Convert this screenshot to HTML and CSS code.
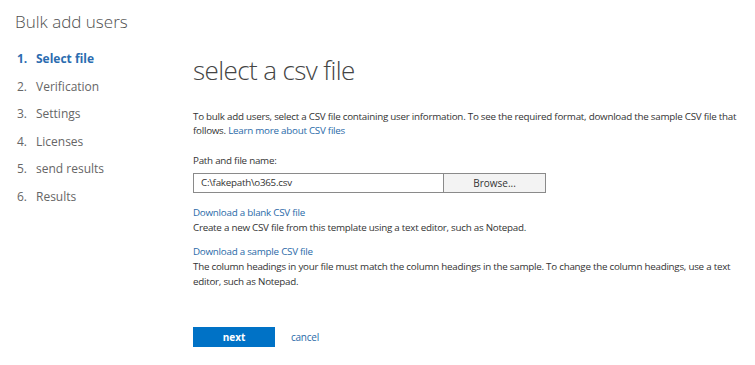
FILE: index.html
```html
<!DOCTYPE html>
<html lang="en">
<head>
    <meta charset="UTF-8">
    <title>Bulk add users</title>
    <link rel="stylesheet" href="styles.css">
</head>
<body>
    <div class="page">
        <div class="sidebar">
            <h2>Bulk add users</h2>
            <ul class="steps">
                <li class="active"><span class="num">1.</span>Select file</li>
                <li><span class="num">2.</span>Verification</li>
                <li><span class="num">3.</span>Settings</li>
                <li><span class="num">4.</span>Licenses</li>
                <li><span class="num">5.</span>send results</li>
                <li><span class="num">6.</span>Results</li>
            </ul>
        </div>

        <div class="content">
            <h1>select a csv file</h1>
            <p class="intro">To bulk add users, select a CSV file containing user information. To see the required format, download the sample CSV file that follows. <a href="#">Learn more about CSV files</a></p>

            <label class="field-label">Path and file name:</label>
            <div class="file-row">
                <div class="file-input">C:\fakepath\o365.csv</div>
                <button class="browse-btn">Browse...</button>
            </div>

            <div class="download">
                <a href="#">Download a blank CSV file</a>
                <p>Create a new CSV file from this template using a text editor, such as Notepad.</p>
            </div>

            <div class="download">
                <a href="#">Download a sample CSV file</a>
                <p>The column headings in your file must match the column headings in the sample. To change the column headings, use a text editor, such as Notepad.</p>
            </div>

            <div class="actions">
                <button class="next-btn">next</button>
                <a href="#" class="cancel">cancel</a>
            </div>
        </div>
    </div>
</body>
</html>
```

FILE: styles.css
```css
:root {
    --title-color: #505050;
    --text-color: #333333;
    --muted: #666666;
    --link: #2a6aa8;
    --active: #2b6cb0;
    --primary: #0072c6;
    --border: #8a8a8a;
}

* {
    margin: 0;
    padding: 0;
    box-sizing: border-box;
}

body {
    font-family: 'Open Sans', 'Noto Sans', sans-serif;
    background: #ffffff;
    color: var(--text-color);
}

.page {
    display: flex;
    width: 755px;
    height: 365px;
    overflow: hidden;
}

.sidebar {
    width: 193px;
    flex-shrink: 0;
    padding: 10px 0 0 15px;
}

.sidebar h2 {
    font-size: 17px;
    font-weight: 300;
    color: var(--title-color);
    line-height: 24px;
    margin-bottom: 11px;
}

.steps {
    list-style: none;
    padding-left: 2px;
}

.steps li {
    font-size: 12px;
    line-height: 27.6px;
    color: var(--muted);
}

.steps li .num {
    display: inline-block;
    width: 19px;
}

.steps li.active {
    color: var(--active);
    font-weight: 700;
}

.content {
    flex: 1;
    padding: 50px 10px 0 0;
    font-size: 9.8px;
    letter-spacing: -0.25px;
}

.content h1 {
    font-size: 26px;
    font-weight: 300;
    color: #444444;
    line-height: 40px;
    letter-spacing: -0.6px;
    margin-bottom: 20px;
}

.content a {
    color: var(--link);
    text-decoration: none;
}

.intro {
    line-height: 14px;
    margin-bottom: 16px;
}

.field-label {
    display: block;
    line-height: 14px;
    margin-bottom: 5px;
}

.file-row {
    display: flex;
    height: 20px;
    margin-bottom: 12px;
}

.file-input {
    width: 251px;
    border: 1px solid var(--border);
    padding: 0 7px;
    line-height: 18px;
}

.browse-btn {
    width: 102px;
    border: 1px solid var(--border);
    border-left: none;
    background: #f3f3f3;
    font-family: inherit;
    font-size: 10px;
    color: var(--text-color);
}

.download {
    margin-bottom: 9px;
    line-height: 15px;
}

.download a {
    display: block;
}

.actions {
    display: flex;
    align-items: center;
    gap: 16px;
    margin-top: 38px;
}

.next-btn {
    width: 82px;
    height: 20px;
    background: var(--primary);
    color: #ffffff;
    border: none;
    font-family: inherit;
    font-size: 10px;
    font-weight: 700;
}

.cancel {
    font-size: 10px;
}
```
